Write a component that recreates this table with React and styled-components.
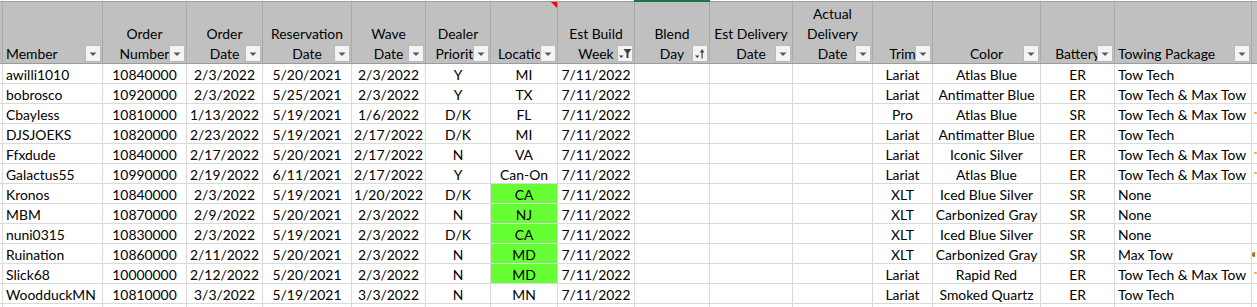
import React from "react";
import styled, { createGlobalStyle, css } from "styled-components";

const GlobalStyle = createGlobalStyle`
  html, body {
    margin: 0;
    padding: 0;
    background: #ffffff;
    overflow: hidden;
  }
`;

const COLUMNS = [
  { w: 3, label: null },
  { w: 100, label: ["Member"], align: "left" },
  { w: 84, label: ["Order", "Number"] },
  { w: 76, label: ["Order", "Date"] },
  { w: 89, label: ["Reservation", "Date"] },
  { w: 74, label: ["Wave", "Date"] },
  { w: 65, label: ["Dealer", "Priority"] },
  { w: 67, label: ["Location"], comment: true },
  { w: 77, label: ["Est Build", "Week"], filter: "funnel" },
  { w: 75, label: ["Blend", "Day"], filter: "sort", selected: true },
  { w: 83, label: ["Est Delivery", "Date"] },
  { w: 80, label: ["Actual", "Delivery", "Date"] },
  { w: 60, label: ["Trim"] },
  { w: 108, label: ["Color"] },
  { w: 74, label: ["Battery"] },
  { w: 137, label: ["Towing Package"], align: "left" },
  { w: 40, label: null, last: true },
];

const ROWS = [
  ["awilli1010", "10840000", "2/3/2022", "5/20/2021", "2/3/2022", "Y", "MI", "7/11/2022", "", "", "", "Lariat", "Atlas Blue", "ER", "Tow Tech"],
  ["bobrosco", "10920000", "2/3/2022", "5/25/2021", "2/3/2022", "Y", "TX", "7/11/2022", "", "", "", "Lariat", "Antimatter Blue", "ER", "Tow Tech & Max Tow"],
  ["Cbayless", "10810000", "1/13/2022", "5/19/2021", "1/6/2022", "D/K", "FL", "7/11/2022", "", "", "", "Pro", "Atlas Blue", "SR", "Tow Tech & Max Tow"],
  ["DJSJOEKS", "10820000", "2/23/2022", "5/19/2021", "2/17/2022", "D/K", "MI", "7/11/2022", "", "", "", "Lariat", "Antimatter Blue", "ER", "Tow Tech"],
  ["Ffxdude", "10840000", "2/17/2022", "5/20/2021", "2/17/2022", "N", "VA", "7/11/2022", "", "", "", "Lariat", "Iconic Silver", "ER", "Tow Tech & Max Tow"],
  ["Galactus55", "10990000", "2/19/2022", "6/11/2021", "2/17/2022", "Y", "Can-On", "7/11/2022", "", "", "", "Lariat", "Atlas Blue", "ER", "Tow Tech & Max Tow"],
  ["Kronos", "10840000", "2/3/2022", "5/19/2021", "1/20/2022", "D/K", "CA", "7/11/2022", "", "", "", "XLT", "Iced Blue Silver", "SR", "None"],
  ["MBM", "10870000", "2/9/2022", "5/20/2021", "2/3/2022", "N", "NJ", "7/11/2022", "", "", "", "XLT", "Carbonized Gray", "SR", "None"],
  ["nuni0315", "10830000", "2/3/2022", "5/19/2021", "2/3/2022", "D/K", "CA", "7/11/2022", "", "", "", "XLT", "Iced Blue Silver", "SR", "None"],
  ["Ruination", "10860000", "2/11/2022", "5/20/2021", "2/3/2022", "N", "MD", "7/11/2022", "", "", "", "XLT", "Carbonized Gray", "SR", "Max Tow"],
  ["Slick68", "10000000", "2/12/2022", "5/20/2021", "2/3/2022", "N", "MD", "7/11/2022", "", "", "", "Lariat", "Rapid Red", "ER", "Tow Tech & Max Tow"],
  ["WoodduckMN", "10810000", "3/3/2022", "5/19/2021", "3/3/2022", "N", "MN", "7/11/2022", "", "", "", "Lariat", "Smoked Quartz", "ER", "Tow Tech"],
];

// rows whose Location cell has the green fill
const GREEN_ROWS = [6, 7, 8, 9, 10];
// marks peeking in from the next column
const MARKS = { 2: "orange", 4: "orange", 5: "orange", 9: "dark", 10: "orange" };

const Sheet = styled.div`
  display: grid;
  grid-template-columns: ${(p) => p.$cols};
  width: 1257px;
  height: 307px;
  overflow: hidden;
  font-family: Lato, "Liberation Sans", sans-serif;
  font-size: 13.9px;
  color: #000000;
`;

const TopCell = styled.div`
  position: relative;
  height: 2px;
  box-sizing: border-box;
  border-right: 1px solid #dadada;
  border-bottom: 1px solid #9c9c9c;
  background: #ffffff;
  ${(p) =>
    p.$selected &&
    css`
      &::before {
        content: "";
        position: absolute;
        left: -1px;
        right: -1px;
        top: 0;
        height: 2px;
        background: #217346;
      }
    `}
`;

const HeaderCell = styled.div`
  position: relative;
  height: 62px;
  box-sizing: border-box;
  background: #c0c0c0;
  border-right: 1px solid #a9a9a9;
  border-bottom: 1px solid #9c9c9c;
  display: flex;
  flex-direction: column;
  justify-content: flex-end;
  align-items: ${(p) => (p.$align === "left" ? "flex-start" : "center")};
  padding-left: ${(p) => (p.$align === "left" ? "3px" : "0")};
  overflow: hidden;
  white-space: nowrap;
`;

const HeaderLine = styled.span`
  display: block;
  line-height: 20px;
  position: relative;
  top: 1px;
`;

const FilterButton = styled.div`
  position: absolute;
  right: 1px;
  bottom: 1px;
  width: 16px;
  height: 17px;
  box-sizing: border-box;
  background: #f4f4f4;
  border: 1px solid #b9b9b9;
  display: flex;
  align-items: center;
  justify-content: center;
`;

const CommentMark = styled.div`
  position: absolute;
  top: 0;
  right: 0;
  width: 0;
  height: 0;
  border-top: 6px solid #ff0000;
  border-left: 6px solid transparent;
`;

const Cell = styled.div`
  height: 20px;
  box-sizing: border-box;
  border-right: 1px solid #dadada;
  border-bottom: 1px solid #dadada;
  background: ${(p) => (p.$fill ? "#66ff33" : "#ffffff")};
  line-height: 21px;
  padding: ${(p) => (p.$align === "left" ? "0 0 0 3px" : "0")};
  text-align: ${(p) => (p.$align === "left" ? "left" : "center")};
  white-space: nowrap;
  overflow: hidden;
  position: relative;
`;

const EdgeMark = styled.span`
  position: absolute;
  top: 8px;
  left: ${(p) => (p.$tone === "dark" ? "0px" : "2px")};
  width: 3px;
  height: ${(p) => (p.$tone === "dark" ? "5px" : "2px")};
  border-radius: ${(p) => (p.$tone === "dark" ? "3px 0 0 3px" : "1px")};
  background: ${(p) => (p.$tone === "dark" ? "#b5651d" : "#f4a93a")};
`;

const ArrowIcon = () => (
  <svg width="14" height="15" viewBox="0 0 14 15">
    <polygon points="3.5,6.5 10.5,6.5 7,10" fill="#5a5a5a" />
  </svg>
);

const FunnelIcon = () => (
  <svg width="14" height="15" viewBox="0 0 14 15">
    <polygon points="1,9.5 5.5,9.5 3.25,12" fill="#3f3f3f" />
    <polygon points="5.5,3 13.5,3 10.5,7 10.5,12 8.5,12 8.5,7" fill="#3f3f3f" />
  </svg>
);

const SortIcon = () => (
  <svg width="14" height="15" viewBox="0 0 14 15">
    <polygon points="2,9.5 6.5,9.5 4.25,12" fill="#3f3f3f" />
    <rect x="8.5" y="5" width="1.2" height="7.5" fill="#3f3f3f" />
    <polygon points="6.8,6.5 11.4,6.5 9.1,3" fill="#3f3f3f" />
  </svg>
);

const iconFor = (kind) => {
  if (kind === "funnel") return <FunnelIcon />;
  if (kind === "sort") return <SortIcon />;
  return <ArrowIcon />;
};

const App = () => {
  const cols = COLUMNS.map((c) => `${c.w}px`).join(" ");

  return (
    <>
      <GlobalStyle />
      <Sheet $cols={cols}>
        {COLUMNS.map((c, i) => (
          <TopCell key={`t${i}`} $selected={c.selected} />
        ))}

        {COLUMNS.map((c, i) => (
          <HeaderCell key={`h${i}`} $align={c.align}>
            {c.label &&
              c.label.map((line) => <HeaderLine key={line}>{line}</HeaderLine>)}
            {c.comment && <CommentMark />}
            {(c.label || i === 0) && <FilterButton>{iconFor(c.filter)}</FilterButton>}
          </HeaderCell>
        ))}

        {ROWS.map((row, r) =>
          COLUMNS.map((c, i) => {
            if (i === 0) return <Cell key={`${r}-${i}`} />;
            if (c.last)
              return (
                <Cell key={`${r}-${i}`}>
                  {MARKS[r] && <EdgeMark $tone={MARKS[r]} />}
                </Cell>
              );
            return (
              <Cell
                key={`${r}-${i}`}
                $align={c.align}
                $fill={i === 7 && GREEN_ROWS.includes(r)}
              >
                {row[i - 1]}
              </Cell>
            );
          })
        )}

        {COLUMNS.map((c, i) => (
          <Cell key={`e${i}`} />
        ))}
      </Sheet>
    </>
  );
};

export default App;
